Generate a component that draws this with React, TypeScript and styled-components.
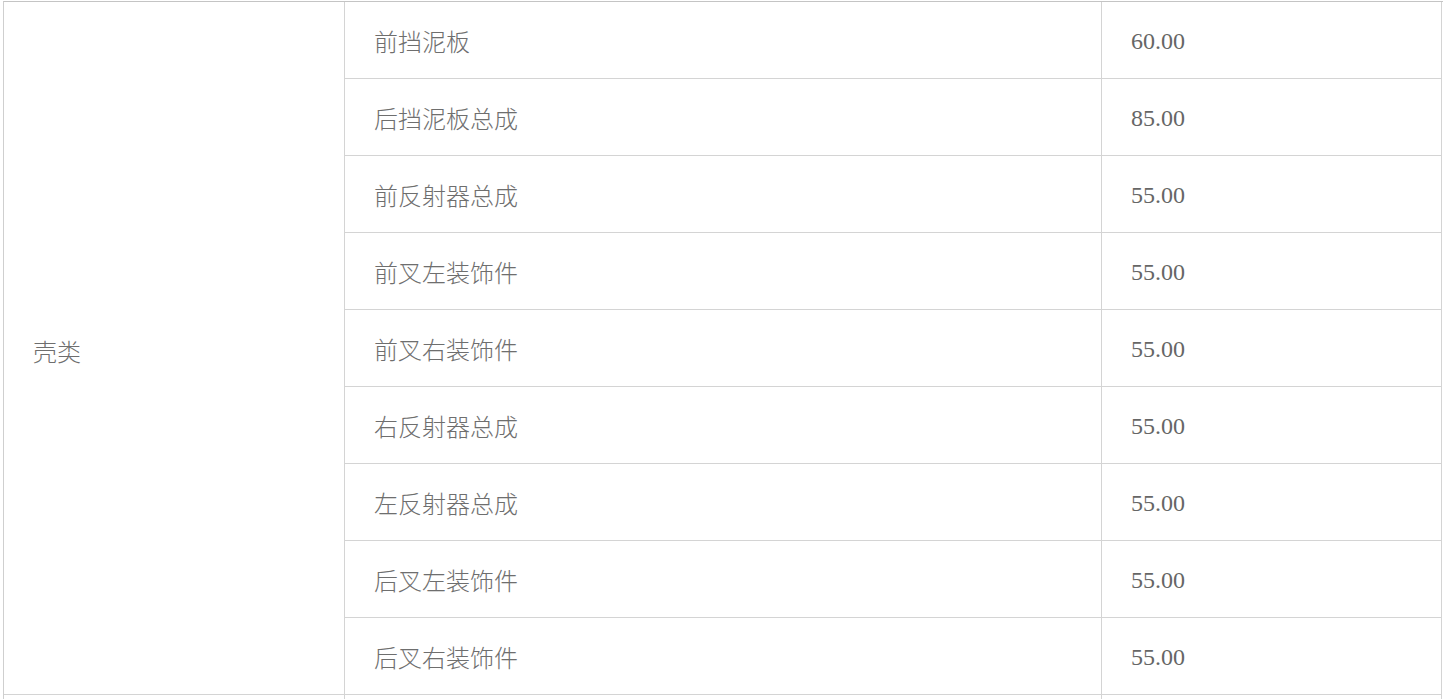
import styled, { createGlobalStyle } from "styled-components";

const GlobalStyle = createGlobalStyle`
	html, body {
		margin: 0;
		padding: 0;
		background: #fff;
	}
	body {
		font-family: "Liberation Serif", "Noto Sans CJK SC", serif;
		color: #666;
	}
`;

const parts = [
	{ name: "前挡泥板", price: "60.00" },
	{ name: "后挡泥板总成", price: "85.00" },
	{ name: "前反射器总成", price: "55.00" },
	{ name: "前叉左装饰件", price: "55.00" },
	{ name: "前叉右装饰件", price: "55.00" },
	{ name: "右反射器总成", price: "55.00" },
	{ name: "左反射器总成", price: "55.00" },
	{ name: "后叉左装饰件", price: "55.00" },
	{ name: "后叉右装饰件", price: "55.00" },
];

export default function App() {
	return (
		<>
			<GlobalStyle />
			<Page>
				<PriceTable>
					<Group>
						<CategoryCell $rows={parts.length}>壳类</CategoryCell>
						{parts.map((p) => (
							<Row key={p.name}>
								<NameCell>{p.name}</NameCell>
								<PriceCell>{p.price}</PriceCell>
							</Row>
						))}
					</Group>
					<Group>
						<CategoryCell $rows={1}></CategoryCell>
						<Row>
							<NameCell></NameCell>
							<PriceCell></PriceCell>
						</Row>
					</Group>
				</PriceTable>
			</Page>
		</>
	);
}

const Page = styled.div`
	padding: 1px 0 0 3px;
	height: 699px;
	overflow: hidden;
	box-sizing: border-box;
`;

const PriceTable = styled.div`
	width: 1439px;
	border-top: 1px solid #c4c4c4;
	border-left: 1px solid #cfcfcf;
`;

const Group = styled.div`
	display: grid;
	grid-template-columns: 341px 1fr;
`;

const Cell = styled.div`
	display: flex;
	align-items: center;
	box-sizing: border-box;
	padding: 1px 0 0 29px;
	border-right: 1px solid #d4d4d4;
	border-bottom: 1px solid #d4d4d4;
	font-size: 24px;
	min-height: 77px;
`;

const CategoryCell = styled(Cell)<{ $rows: number }>`
	grid-row: span ${(p) => p.$rows};
	padding-top: 5px;
	font-family: "Noto Sans CJK SC", sans-serif;
	font-weight: 300;
	color: #6e6e6e;
`;

const Row = styled.div`
	grid-column: 2;
	display: grid;
	grid-template-columns: 757px 340px;
`;

const NameCell = styled(Cell)`
	font-family: "Noto Sans CJK SC", sans-serif;
	font-weight: 300;
	color: #6e6e6e;
`;

const PriceCell = styled(Cell)`
	padding-top: 3px;
	font-family: "Liberation Serif", serif;
`;
